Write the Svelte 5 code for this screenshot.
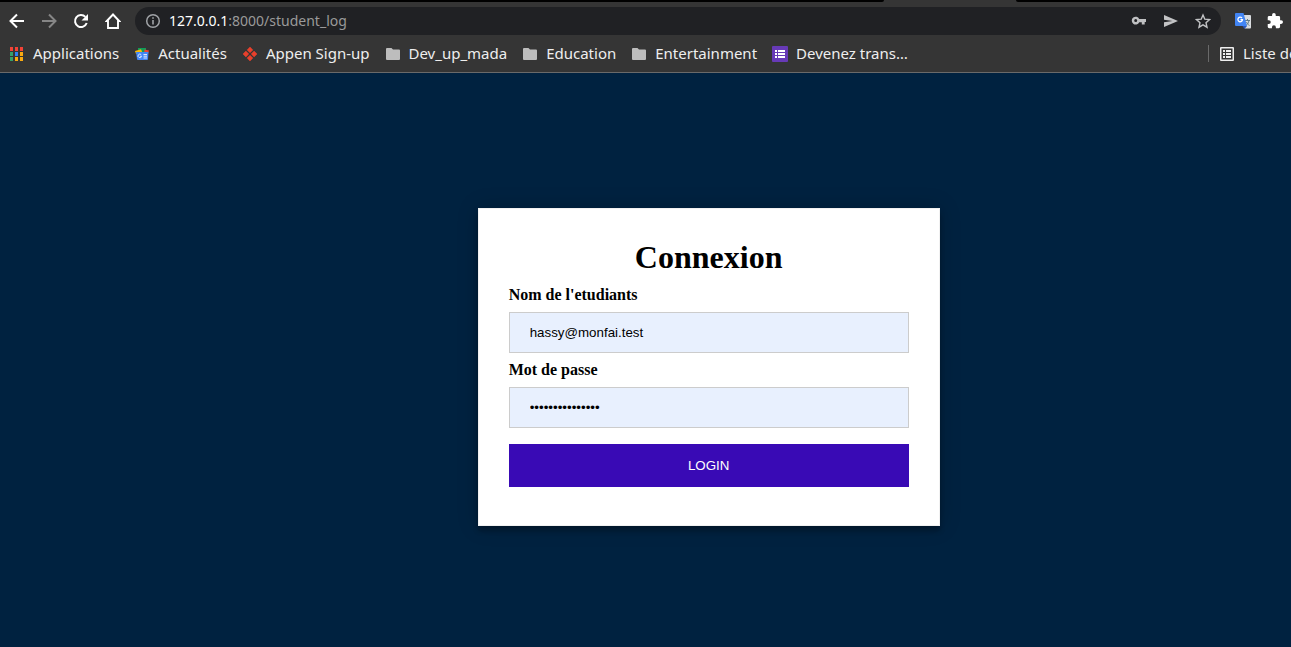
<script>
  let username = $state('hassy@monfai.test');
  let password = $state('motdepasse12345');

  const bookmarks = [
    { label: 'Applications', icon: 'apps' },
    { label: 'Actualités', icon: 'news' },
    { label: 'Appen Sign-up', icon: 'appen' },
    { label: 'Dev_up_mada', icon: 'folder' },
    { label: 'Education', icon: 'folder' },
    { label: 'Entertainment', icon: 'folder' },
    { label: 'Devenez trans…', icon: 'form' }
  ];

  const appCells = [
    '#f44336', '#f44336', '#f44336',
    '#34a06a', '#2f80f0', '#fbab10',
    '#34a06a', '#fbab10', '#fbab10'
  ];
</script>

<div class="window">
  <div class="tabs"><span class="left"></span><span class="right"></span></div>

  <header>
    <nav class="toolbar" aria-label="Navigation">
      <button aria-label="Retour">
        <svg viewBox="0 0 16 16"><path d="M15 8H2M8 1.5 1.5 8 8 14.5" fill="none" stroke="#fff" stroke-width="2" /></svg>
      </button>
      <button aria-label="Avancer">
        <svg viewBox="0 0 16 16"><path d="M1 8h13M8 1.5 14.5 8 8 14.5" fill="none" stroke="#868686" stroke-width="2" /></svg>
      </button>
      <button aria-label="Actualiser">
        <svg viewBox="0 0 16 16"><path d="M13.7 10A6 6 0 1 1 12.4 3.9" fill="none" stroke="#fff" stroke-width="2" /><path d="M15 1v6.5H8.5z" fill="#fff" /></svg>
      </button>
      <button aria-label="Accueil">
        <svg viewBox="0 0 16 16"><path d="M1.800 8 8 1.500 14.200 8H13v7H3V8z" fill="none" stroke="#fff" stroke-width="1.900" /></svg>
      </button>

      <div class="address">
        <svg viewBox="0 0 16 16"><circle cx="8" cy="8" r="6.3" fill="none" stroke="#a0a3a7" stroke-width="1.5" /><path d="M8 7v4.5M8 4.2v1.6" stroke="#a0a3a7" stroke-width="1.6" /></svg>
        <span class="url"><b>127.0.0.1</b>:8000/student_log</span>
        <button aria-label="Mots de passe">
          <svg viewBox="0 0 16 16"><path fill="#bfc0c2" fill-rule="evenodd" d="M8.2 6H15v3h-1.3v2.5H10.8V9.200H8.200A3.900 3.900 0 1 1 8.200 6zM4.700 6.100a1.500 1.500 0 1 0 0 3 1.500 1.500 0 0 0 0-3z" /></svg>
        </button>
        <button aria-label="Envoyer">
          <svg viewBox="0 0 16 16"><path fill="#c2c3c5" d="M1 2 15 8 1 14V9.300L9.500 8 1 6.700z" /></svg>
        </button>
        <button aria-label="Ajouter aux favoris">
          <svg viewBox="0 0 16 16"><path d="m8 2 1.800 4.200 4.700.4-3.500 3.100 1 4.500L8 11.800l-4 2.400 1-4.500L1.500 6.600l4.700-.4z" fill="none" stroke="#c2c3c5" stroke-width="1.400" /></svg>
        </button>
      </div>

      <button aria-label="Traduire">
        <svg viewBox="0 0 16 16">
          <path fill="#d9dcdf" d="M6 2h9a1 1 0 0 1 1 1v11.500a1 1 0 0 1-1 1H10z" />
          <path d="M10 7.500h5M12.500 6v1.500M14 7.500c-.5 2.500-1.500 4-3 5M11.500 9c.6 1.500 1.500 2.500 3 3.500" fill="none" stroke="#607d8b" />
          <path fill="#4285f4" d="M1 0h7.500L12 13H1a1 1 0 0 1-1-1V1a1 1 0 0 1 1-1z" />
          <path fill="#2b57b5" d="M7.500 13H12l-2.500 3z" />
          <path d="M7 5A2.300 2.300 0 1 0 7.500 6.600H5.500" fill="none" stroke="#fff" stroke-width="1.300" />
        </svg>
      </button>
      <button aria-label="Extensions">
        <svg viewBox="1 1 22 22"><path fill="#fff" d="M20.500 11H19V7a2 2 0 0 0-2-2h-4V3.500a2.500 2.500 0 0 0-5 0V5H4a2 2 0 0 0-2 2v3.800h1.500a2.700 2.700 0 0 1 0 5.400H2V20a2 2 0 0 0 2 2h3.800v-1.500a2.700 2.700 0 0 1 5.400 0V22H17a2 2 0 0 0 2-2v-4h1.500a2.500 2.500 0 0 0 0-5z" /></svg>
      </button>
    </nav>

    <nav class="bookmarks" aria-label="Favoris">
      {#each bookmarks as item}
        <a href="#{item.icon}">
          <svg viewBox="0 0 16 16">
            {#if item.icon === 'apps'}
              {#each appCells as color, i}
                <rect x={1 + (i % 3) * 5} y={1 + Math.floor(i / 3) * 5} width="3" height="4" fill={color} />
              {/each}
            {:else if item.icon === 'news'}
              <path fill="#0f9d58" d="M4 2h8v4H4z" />
              <path fill="#ea4335" d="m10.500 3.500 4.500 1-1 3.500h-4z" />
              <path fill="#fbbc04" d="m1 5 6-1.800L9 8H2z" />
              <path fill="#4285f4" d="M2 6h12.500l-.5 7a1 1 0 0 1-1 1H4a1 1 0 0 1-1-1z" />
              <path d="M7.300 8.800a1.800 1.800 0 1 0 .3 1.500H6M9.500 8.500H13M9.500 10.200H13M9.500 12H13" fill="none" stroke="#dce8ff" />
            {:else if item.icon === 'appen'}
              <path fill="#e8402c" d="m8 1 2.900 2.900L8 6.800 5.100 3.900zM8 9.200l2.900 2.900L8 15l-2.900-2.900zM3.900 5.100 6.800 8l-2.900 2.900L1 8zM12.100 5.100 15 8l-2.900 2.900L9.200 8z" />
              <path d="m8 1 2.900 2.900L8 6.800 5.100 3.900zM8 9.200l2.900 2.900L8 15l-2.900-2.900zM3.900 5.100 6.800 8l-2.900 2.900L1 8zM12.100 5.100 15 8l-2.900 2.900L9.200 8z" fill="none" stroke="#e8402c" stroke-width=".5" stroke-linejoin="round" />
            {:else if item.icon === 'folder'}
              <path fill="#bdbdbd" d="M2 2h4.500L8 3.500h6a1 1 0 0 1 1 1V13a1 1 0 0 1-1 1H2a1 1 0 0 1-1-1V3a1 1 0 0 1 1-1z" />
            {:else}
              <rect width="16" height="16" rx="1" fill="#673ab7" />
              <path fill="#fff" d="M3 4h2v2H3zM3 7h2v2H3zM3 10h2v2H3zM6 4h7v2H6zM6 7h7v2H6zM6 10h7v2H6z" />
            {/if}
          </svg>
          {item.label}
        </a>
      {/each}
      <a class="reading" href="#liste">
        <svg viewBox="0 0 16 16"><path fill="#eee" fill-rule="evenodd" d="M2 1h12a1 1 0 0 1 1 1v12a1 1 0 0 1-1 1H2a1 1 0 0 1-1-1V2a1 1 0 0 1 1-1zM2.500 2.500v11h11v-11z" /><path d="M4 5h2M7 5h5M4 8h2M7 8h5M4 11h2M7 11h5" stroke="#eee" stroke-width="1.800" /></svg>
        Liste de lecture
      </a>
    </nav>
  </header>

  <main>
    <form onsubmit={(event) => event.preventDefault()}>
      <h1>Connexion</h1>
      <label for="username">Nom de l'etudiants</label>
      <input id="username" type="text" bind:value={username} />
      <label for="password">Mot de passe</label>
      <input id="password" type="password" bind:value={password} />
      <button type="submit">LOGIN</button>
    </form>
  </main>
</div>

<style>
  :global(body) {
    margin: 0;
    background: #002240;
  }

  .window {
    display: flex;
    flex-direction: column;
    min-height: 100vh;
    overflow: hidden;
  }

  .tabs {
    display: flex;
    justify-content: space-between;
    height: 2px;
    background: #353535;
  }

  .tabs span {
    background: #000;
  }

  .left {
    width: 68.5%;
    border-bottom-right-radius: 2px;
  }

  .right {
    width: 21.3%;
    border-bottom-left-radius: 2px;
  }

  header {
    background: #353535;
    border-bottom: 1px solid #6a6a6a;
    font-family: "Noto Sans", sans-serif;
    font-size: 14px;
    line-height: 18px;
    color: #eee;
  }

  svg {
    display: block;
    flex: none;
    width: 16px;
    height: 16px;
  }

  .toolbar {
    display: flex;
    align-items: center;
    gap: 16px;
    padding: 5px 8px 0 9px;
  }

  .toolbar button {
    padding: 0;
    border: 0;
    background: none;
  }

  .address {
    display: flex;
    flex: 1;
    align-items: center;
    gap: 16px;
    height: 28px;
    margin: 0 -2px;
    padding: 0 10px;
    border-radius: 14px;
    background: #202124;
  }

  .url {
    flex: 1;
    margin-left: -8px;
    color: #9a9a9a;
  }

  .url b {
    color: #fff;
    font-weight: 400;
  }

  .bookmarks {
    display: flex;
    align-items: center;
    gap: 15px;
    height: 37px;
    padding-left: 9px;
    font-size: 15px;
    line-height: 17px;
    white-space: nowrap;
  }

  .bookmarks a {
    display: flex;
    flex: none;
    align-items: center;
    gap: 8px;
    color: inherit;
    text-decoration: none;
  }

  .bookmarks .reading {
    box-sizing: border-box;
    width: 83px;
    margin-left: auto;
    padding-left: 10px;
    border-left: 1px solid #6a6a6a;
    overflow: hidden;
  }

  main {
    flex: 1;
    padding: 135px 0 32px 37%;
  }

  form {
    box-sizing: border-box;
    width: 462px;
    max-width: 100%;
    padding: 30px 30px 38px;
    border: 1px solid #f1f1f1;
    background: #fff;
    box-shadow: 0 0 20px rgba(0, 0, 0, 0.2), 0 5px 5px rgba(0, 0, 0, 0.24);
    color: #000;
    font: 16px/18px "Liberation Serif", serif;
  }

  h1 {
    margin: 0 0 10px;
    font-size: 32px;
    line-height: 37px;
    text-align: center;
  }

  label {
    display: block;
    font-weight: 700;
  }

  input,
  form button {
    display: block;
    box-sizing: border-box;
    width: 100%;
    border-radius: 0;
    font-family: "Liberation Sans", sans-serif;
  }

  input {
    height: 41px;
    margin: 8px 0;
    padding: 12px 20px;
    border: 1px solid #ccc;
    background: #e8f0fe;
    color: #000;
  }

  form button {
    height: 43px;
    margin-top: 16px;
    padding: 14px 20px;
    border: 0;
    background: #390ab5;
    color: #fff;
    cursor: pointer;
  }
</style>
